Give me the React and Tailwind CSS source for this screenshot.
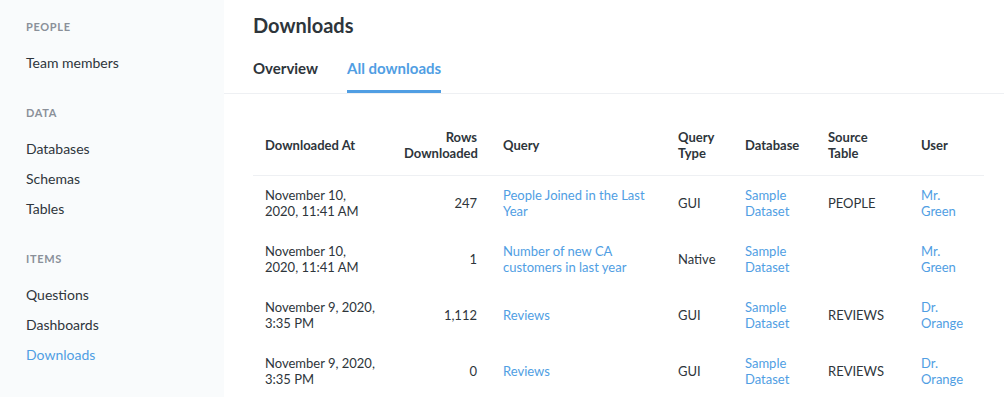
import React from "react";

const rows = [
  { at: ["November 10,", "2020, 11:41 AM"], n: "247", q: ["People Joined in the Last", "Year"], t: "GUI", db: ["Sample", "Dataset"], src: "PEOPLE", user: ["Mr.", "Green"] },
  { at: ["November 10,", "2020, 11:41 AM"], n: "1", q: ["Number of new CA", "customers in last year"], t: "Native", db: ["Sample", "Dataset"], src: "", user: ["Mr.", "Green"] },
  { at: ["November 9, 2020,", "3:35 PM"], n: "1,112", q: ["Reviews"], t: "GUI", db: ["Sample", "Dataset"], src: "REVIEWS", user: ["Dr.", "Orange"] },
  { at: ["November 9, 2020,", "3:35 PM"], n: "0", q: ["Reviews"], t: "GUI", db: ["Sample", "Dataset"], src: "REVIEWS", user: ["Dr.", "Orange"] },
];

function Lines({ l }) {
  return l.map((s, i) => <div key={i}>{s}</div>);
}

function Section({ title, items, first }) {
  return (
    <div className={first ? "" : "mt-[29px]"}>
      <div className="text-[11px] font-bold tracking-[0.06em] text-[#8a9099] leading-[14px] h-[14px]">{title}</div>
      <div className="mt-[13px] flex flex-col">
        {items.map((it) => (
          <div
            key={it}
            className={`h-[30px] flex items-center text-[14px] ${it === "Downloads" ? "text-[#509ee3]" : "text-[#2e353b]"}`}
          >
            {it}
          </div>
        ))}
      </div>
    </div>
  );
}

export default function App() {
  return (
    <div className="flex w-[1004px] h-[397px] overflow-hidden bg-white" style={{ fontFamily: "Lato, 'Open Sans', sans-serif" }}>
      <aside className="w-[224px] shrink-0 bg-[#f9fbfc] pl-[26px] pt-[20px]">
        <Section first title="PEOPLE" items={["Team members"]} />
        <Section title="DATA" items={["Databases", "Schemas", "Tables"]} />
        <Section title="ITEMS" items={["Questions", "Dashboards", "Downloads"]} />
      </aside>
      <main className="flex-1 flex flex-col">
        <div className="border-b border-[#eef0f3] pl-[29px]">
          <h1 className="text-[20px] font-bold text-[#2e353b] leading-[24px] mt-[13px]">Downloads</h1>
          <div className="flex gap-[29px] mt-[22px]">
            <div className="text-[15px] font-bold text-[#2e353b] leading-[18px] pb-[16px]">Overview</div>
            <div className="text-[15px] font-bold text-[#509ee3] leading-[18px] pb-[13px] border-b-[3px] border-[#509ee3]">All downloads</div>
          </div>
        </div>
        <div className="pl-[29px] pt-[22px]">
          <table className="table-fixed border-collapse w-[731px] text-[13px] leading-[16px] text-[#2e353b]">
            <colgroup>
              <col className="w-[139px]" />
              <col className="w-[97px]" />
              <col className="w-[177px]" />
              <col className="w-[67px]" />
              <col className="w-[83px]" />
              <col className="w-[93px]" />
              <col className="w-[75px]" />
            </colgroup>
            <thead>
              <tr className="h-[59px] border-b border-[#eef0f3] font-bold">
                <th className="px-[12px] text-left font-bold">Downloaded At</th>
                <th className="px-[12px] text-right font-bold">Rows<br />Downloaded</th>
                <th className="pl-[14px] pr-[12px] text-left font-bold">Query</th>
                <th className="px-[12px] text-left font-bold">Query<br />Type</th>
                <th className="px-[12px] text-left font-bold">Database</th>
                <th className="px-[12px] text-left font-bold">Source<br />Table</th>
                <th className="px-[12px] text-left font-bold">User</th>
              </tr>
            </thead>
            <tbody>
              {rows.map((r, i) => (
                <tr key={i} className="h-[56px]">
                  <td className="px-[12px]"><Lines l={r.at} /></td>
                  <td className="px-[12px] text-right">{r.n}</td>
                  <td className="pl-[14px] pr-[10px] text-[#509ee3]"><Lines l={r.q} /></td>
                  <td className="px-[12px]">{r.t}</td>
                  <td className="px-[12px] text-[#509ee3]"><Lines l={r.db} /></td>
                  <td className="px-[12px]">{r.src}</td>
                  <td className="px-[12px] text-[#509ee3]"><Lines l={r.user} /></td>
                </tr>
              ))}
            </tbody>
          </table>
        </div>
      </main>
    </div>
  );
}
